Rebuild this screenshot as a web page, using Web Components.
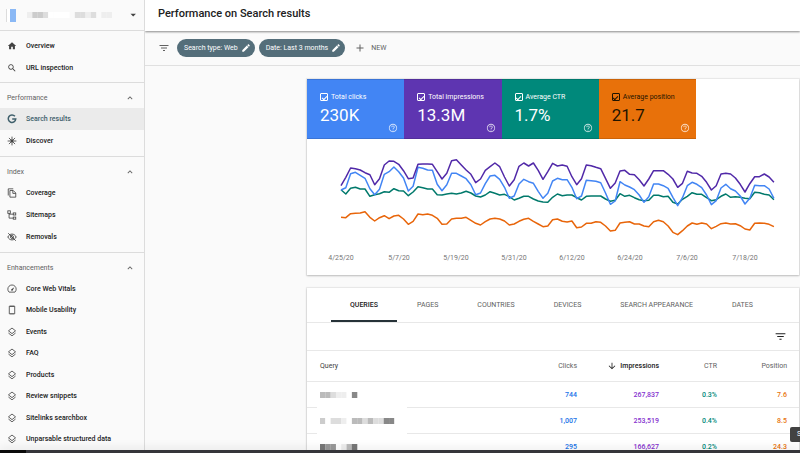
<!DOCTYPE html>
<html lang="en">
<head>
<meta charset="utf-8">
<meta name="viewport" content="width=device-width, initial-scale=1">
<title>Performance on Search results</title>
<style>
  html, body {
    margin: 0;
    height: 100%;
    overflow: hidden;
  }

  body {
    background: #fafafa;
    color: #212121;
    font-family: Roboto, "Liberation Sans", sans-serif;
    font-size: 7px;
    line-height: 10px;
  }
</style>
</head>
<body>

<search-console>
  <side-nav slot="nav">
    <nav-section>
      <nav-item icon="home">Overview</nav-item>
      <nav-item icon="search">URL inspection</nav-item>
    </nav-section>
    <nav-section label="Performance">
      <nav-item icon="google" active>Search results</nav-item>
      <nav-item icon="discover">Discover</nav-item>
    </nav-section>
    <nav-section label="Index">
      <nav-item icon="copy">Coverage</nav-item>
      <nav-item icon="sitemap">Sitemaps</nav-item>
      <nav-item icon="hidden">Removals</nav-item>
    </nav-section>
    <nav-section label="Enhancements" fill>
      <nav-item icon="speed">Core Web Vitals</nav-item>
      <nav-item icon="phone">Mobile Usability</nav-item>
      <nav-item icon="layers">Events</nav-item>
      <nav-item icon="layers">FAQ</nav-item>
      <nav-item icon="layers">Products</nav-item>
      <nav-item icon="layers">Review snippets</nav-item>
      <nav-item icon="layers">Sitelinks searchbox</nav-item>
      <nav-item icon="layers">Unparsable structured data</nav-item>
    </nav-section>
  </side-nav>

  <span slot="title">Performance on Search results</span>

  <filter-bar slot="filters">
    <filter-chip>Search type: Web</filter-chip>
    <filter-chip>Date: Last 3 months</filter-chip>
  </filter-bar>

  <content-card>
    <metric-row>
      <metric-tile label="Total clicks" value="230K" style="--tile: #4285f4"></metric-tile>
      <metric-tile label="Total impressions" value="13.3M" style="--tile: #5e35b1"></metric-tile>
      <metric-tile label="Average CTR" value="1.7%" style="--tile: #00897b"></metric-tile>
      <metric-tile label="Average position" value="21.7" style="--tile: #e8710a; --ink: #1f1400"></metric-tile>
    </metric-row>
    <trend-chart></trend-chart>
  </content-card>

  <content-card>
    <tab-bar tabs="Queries,Pages,Countries,Devices,Search appearance,Dates"></tab-bar>
    <query-table></query-table>
  </content-card>
</search-console>

<script>
  const ICONS = {
    home: '<path d="M10 20v-6h4v6h5v-8h3L12 3 2 12h3v8z"/>',
    search: '<path d="M15.5 14h-.79l-.28-.27C15.41 12.59 16 11.11 16 9.5 16 5.91 13.09 3 9.5 3S3 5.91 3 9.5 5.91 16 9.5 16c1.61 0 3.09-.59 4.23-1.57l.27.28v.79l5 4.99L20.49 19l-4.99-5zm-6 0C7.01 14 5 11.99 5 9.5S7.01 5 9.5 5 14 7.01 14 9.5 11.99 14 9.5 14z"/>',
    google: '<path d="M19 5.5A9 9 0 1 0 21 12H12.5" fill="none" stroke="currentColor" stroke-width="3.6"/>',
    discover: '<g stroke="currentColor" stroke-width="2"><path d="M12 1.5v21M1.5 12h21M4.6 4.6l14.8 14.8M19.4 4.6L4.6 19.4"/></g><circle cx="12" cy="12" r="3.5"/>',
    copy: '<g fill="none" stroke="currentColor" stroke-width="2"><path d="M3 18V2h12"/><path d="M7 6h8l6 6v10H7z"/><path d="M14 6v7h7"/></g>',
    sitemap: '<g fill="none" stroke="currentColor" stroke-width="2"><rect x="2" y="2" width="6" height="6"/><rect x="15" y="7" width="6" height="5"/><rect x="15" y="17" width="6" height="5"/><path d="M5 8v11.5h10M5 10h10"/></g>',
    hidden: '<g fill="none" stroke="currentColor" stroke-width="2.2"><path d="M2 12c2-4.5 5.8-7 10-7s8 2.5 10 7c-2 4.5-5.8 7-10 7s-8-2.5-10-7z"/><circle cx="12" cy="12" r="3.5"/><path d="M3 3l18 18"/></g>',
    speed: '<path d="M5 19.5A10 10 0 1 1 19 19.5z" fill="none" stroke="currentColor" stroke-width="2"/><path d="M17.5 8l-4 7.5a2 2 0 0 1-3-3z"/>',
    phone: '<rect x="5.5" y="2.5" width="13" height="19" rx="1" fill="none" stroke="currentColor" stroke-width="2"/><path d="M6 3h12v1.5H6zM6 19.5h12V21H6z"/>',
    layers: '<g fill="none" stroke="currentColor" stroke-width="2"><path d="M12 2.5l8.5 6.7-8.5 6.7-8.5-6.7z"/><path d="M3.5 14.5l8.5 6.7 8.5-6.7"/></g>',
    less: '<path d="M12 8l-6 6 1.41 1.41L12 10.83l4.59 4.58L18 14z"/>',
    drop: '<path d="M6 9l6.5 6.5L19 9z"/>',
    edit: '<path d="M3 17.25V21h3.75L17.81 9.94l-3.75-3.75L3 17.25zM20.71 7.04c.39-.39.39-1.02 0-1.41l-2.34-2.34c-.39-.39-1.02-.39-1.41 0l-1.83 1.83 3.75 3.75 1.83-1.83z"/>',
    filter: '<path d="M10 18h4v-2h-4v2zM3 6v2h18V6H3zm3 7h12v-2H6v2z"/>',
    add: '<path d="M19 13h-6v6h-2v-6H5v-2h6V5h2v6h6v2z"/>',
    help: '<path d="M11 18h2v-2h-2v2zm1-16C6.48 2 2 6.48 2 12s4.48 10 10 10 10-4.48 10-10S17.52 2 12 2zm0 18c-4.41 0-8-3.59-8-8s3.59-8 8-8 8 3.59 8 8-3.59 8-8 8zm0-14c-2.21 0-4 1.79-4 4h2c0-1.1.9-2 2-2s2 .9 2 2c0 2-3 1.75-3 5h2c0-2.25 3-2.5 3-5 0-2.21-1.79-4-4-4z"/>',
    down: '<path d="M20 12l-1.41-1.41L13 16.17V4h-2v12.17l-5.58-5.59L4 12l8 8z"/>'
  };

  const RESET = `
    :host, * { box-sizing: border-box; }
    button {
      margin: 0;
      padding: 0;
      border: 0;
      background: none;
      color: inherit;
      font: inherit;
      cursor: pointer;
    }
  `;

  class AppIcon extends HTMLElement {
    connectedCallback() {
      this.attachShadow({ mode: "open" }).innerHTML = `
        <style>
          :host { display: block; flex: none; width: 10px; height: 10px; }
          svg { display: block; width: 100%; height: 100%; fill: currentColor; }
        </style>
        <svg viewBox="0 0 24 24" aria-hidden="true">${ICONS[this.getAttribute("name")]}</svg>
      `;
    }
  }

  // Masked text: every hex digit in "shades" is one grey block, a dot is a gap
  class MaskedText extends HTMLElement {
    connectedCallback() {
      const blocks = [...this.getAttribute("shades")].map((s, i) =>
        s === "." ? "" : `<rect x="${i}" width="1.02" height="1" fill="#${s}${s}${s}"/>`
      ).join("");
      this.attachShadow({ mode: "open" }).innerHTML = `
        <style>
          :host { display: block; }
          svg { display: block; width: 85px; height: 6px; }
        </style>
        <svg viewBox="0 0 16 1" preserveAspectRatio="none" aria-hidden="true">${blocks}</svg>
      `;
    }
  }

  class NavItem extends HTMLElement {
    connectedCallback() {
      this.attachShadow({ mode: "open" }).innerHTML = `
        <style>
          ${RESET}
          :host { display: grid; min-height: 20px; color: #424242; }
          :host([active]) { background: #ebebeb; color: #3f5f6b; }
          a {
            display: flex;
            align-items: center;
            gap: 9px;
            padding: 0 7px;
            color: inherit;
            font-weight: 500;
            text-decoration: none;
            white-space: nowrap;
          }
          span { color: #212121; }
          :host([active]) span { color: inherit; }
        </style>
        <a href="#"><app-icon name="${this.getAttribute("icon")}"></app-icon><span><slot></slot></span></a>
      `;
    }
  }

  class NavSection extends HTMLElement {
    connectedCallback() {
      const label = this.getAttribute("label");
      this.attachShadow({ mode: "open" }).innerHTML = `
        <style>
          ${RESET}
          :host {
            display: flex;
            flex-direction: column;
            padding: 4px 0;
            border-top: 1px solid #dcdcdc;
          }
          :host(:not([label])) { padding-bottom: 3px; }
          :host([fill]) { flex: 1; padding-bottom: 0; }
          button {
            display: flex;
            justify-content: space-between;
            align-items: center;
            height: 21px;
            padding: 0 9px 0 7px;
            color: #616161;
          }
          .items { display: grid; grid-auto-rows: 22px; }
          :host([fill]) .items { flex: 1; grid-auto-rows: minmax(20px, 1fr); }
        </style>
        ${label ? `<button type="button">${label}<app-icon name="less"></app-icon></button>` : ""}
        <div class="items"><slot></slot></div>
      `;
    }
  }

  class SideNav extends HTMLElement {
    connectedCallback() {
      this.attachShadow({ mode: "open" }).innerHTML = `
        <style>
          ${RESET}
          :host {
            display: flex;
            flex-direction: column;
            height: 100%;
            border-right: 1px solid #dcdcdc;
          }
          .property {
            display: flex;
            align-items: center;
            gap: 11px;
            height: 30px;
            padding: 0 6px;
            color: #424242;
          }
          .favicon {
            width: 10px;
            height: 13px;
            border-left: 1px solid #dcdcdc;
            background: linear-gradient(90deg, #fff 3px, #8ab8f5 3px);
          }
          masked-text { flex: 1; }
        </style>
        <button type="button" class="property" aria-label="Select property">
          <span class="favicon"></span>
          <masked-text shades="eccdffff.dded.ee"></masked-text>
          <app-icon name="drop"></app-icon>
        </button>
        <slot></slot>
      `;
    }
  }

  class FilterChip extends HTMLElement {
    connectedCallback() {
      this.attachShadow({ mode: "open" }).innerHTML = `
        <style>
          ${RESET}
          :host { display: block; }
          button {
            display: flex;
            align-items: center;
            gap: 3px;
            height: 18px;
            padding: 0 4px 0 7px;
            border-radius: 9px;
            background: #546e7a;
            color: #fff;
            white-space: nowrap;
          }
        </style>
        <button type="button"><slot></slot><app-icon name="edit"></app-icon></button>
      `;
    }
  }

  class FilterBar extends HTMLElement {
    connectedCallback() {
      this.attachShadow({ mode: "open" }).innerHTML = `
        <style>
          ${RESET}
          :host {
            display: flex;
            align-items: center;
            gap: 4px;
            height: 35px;
            padding: 0 13px;
            border-bottom: 1px solid #e0e0e0;
            color: #616161;
          }
          .filter { padding-right: 3px; }
          .filter app-icon, .new app-icon { width: 12px; height: 12px; }
          .new {
            display: flex;
            align-items: center;
            gap: 5px;
            padding: 0 5px;
          }
        </style>
        <button type="button" class="filter" aria-label="Filter"><app-icon name="filter"></app-icon></button>
        <slot></slot>
        <button type="button" class="new"><app-icon name="add"></app-icon>NEW</button>
      `;
    }
  }

  class ContentCard extends HTMLElement {
    connectedCallback() {
      this.attachShadow({ mode: "open" }).innerHTML = `
        <style>
          :host {
            display: block;
            background: #fff;
            box-shadow: 0 0 1px 1px rgba(0, 0, 0, .06), 0 1px 2px rgba(0, 0, 0, .2);
          }
        </style>
        <slot></slot>
      `;
    }
  }

  class MetricRow extends HTMLElement {
    connectedCallback() {
      this.attachShadow({ mode: "open" }).innerHTML = `
        <style>
          :host {
            display: grid;
            grid-template-columns: repeat(4, 1fr);
            max-width: 389px;
          }
        </style>
        <slot></slot>
      `;
    }
  }

  class MetricTile extends HTMLElement {
    connectedCallback() {
      this.attachShadow({ mode: "open" }).innerHTML = `
        <style>
          ${RESET}
          :host {
            display: grid;
            grid-template-columns: 1fr auto;
            align-content: start;
            height: 60px;
            padding: 13px 6px 0 13px;
            background: var(--tile);
            box-shadow: inset 0 1px rgba(0, 0, 0, .12), inset 0 -1px rgba(0, 0, 0, .12);
            color: var(--ink, #fff);
          }
          label {
            grid-column: 1 / 3;
            display: flex;
            align-items: center;
            gap: 3px;
            white-space: nowrap;
          }
          input {
            appearance: none;
            display: grid;
            place-items: center;
            width: 8px;
            height: 8px;
            margin: 0;
            border: 1px solid;
            border-radius: 1px;
            color: inherit;
          }
          input:checked::before {
            content: "";
            width: 4px;
            height: 2px;
            border: solid;
            border-width: 0 0 1px 1px;
            rotate: -45deg;
          }
          output { font-size: 17px; line-height: 20px; padding-top: 3px; }
          button { align-self: end; color: #fff; opacity: .75; margin-bottom: -8px; }
        </style>
        <label><input type="checkbox" checked>${this.getAttribute("label")}</label>
        <output>${this.getAttribute("value")}</output>
        <button type="button" aria-label="Help"><app-icon name="help"></app-icon></button>
      `;
    }
  }

  // Daily values, as depth below the top of the plot in thirds of a unit
  const SERIES = [
    ["#00796b", [134,147,130,127,132,132,154,149,146,140,142,131,137,138,152,141,125,128,132,132,149,150,147,145,147,144,139,144,153,156,150,140,145,150,148,155,165,160,154,154,162,168,171,172,157,147,152,150,150,158,165,154,153,153,153,162,169,166,146,154,151,158,164,167,166,151,151,155,154,172,177,163,154,143,148,148,158,167,164,154,147,157,155,157,160,161,142,143,148,150,164]],
    ["#4285f4", [135,128,86,82,91,100,131,149,133,88,80,66,80,99,138,124,67,70,75,76,118,137,119,85,85,93,101,119,149,144,116,93,91,103,127,160,153,117,103,110,115,139,160,145,108,100,104,104,127,161,153,106,107,109,113,144,178,168,110,120,126,134,150,172,155,117,117,122,130,157,182,158,122,112,118,128,150,179,167,129,118,131,138,153,177,160,121,122,122,132,160]],
    ["#5129a8", [122,97,69,71,75,83,89,119,101,60,48,49,58,77,101,99,58,57,57,58,80,102,85,47,44,60,75,88,113,102,76,65,54,65,96,123,104,64,54,63,54,76,103,80,55,63,60,64,95,119,101,60,62,67,71,100,130,114,78,76,88,89,104,123,102,77,77,77,88,102,127,115,79,84,85,94,112,135,122,87,85,87,99,118,141,116,95,95,87,96,112]],
    ["#e8650a", [217,218,206,205,204,200,217,228,218,212,221,213,211,222,238,229,207,209,207,211,220,238,237,222,220,220,217,226,235,240,230,222,220,222,228,240,237,229,223,220,229,237,245,243,224,222,229,231,228,248,246,235,235,230,232,243,258,256,234,232,230,237,237,243,245,230,226,230,243,262,269,257,243,234,238,234,237,251,244,236,234,237,236,242,252,255,235,234,235,238,245]]
  ];
  const DATES = ["4/25/20", "5/7/20", "5/19/20", "5/31/20", "6/12/20", "6/24/20", "7/6/20", "7/18/20"];

  class TrendChart extends HTMLElement {
    connectedCallback() {
      const left = 34;
      const step = 4.81;
      const lines = SERIES.map(([color, values]) => {
        const points = values.map((v, i) => `${(left + i * step).toFixed(1)},${(6 + v / 3).toFixed(1)}`);
        return `<polyline stroke="${color}" points="${points.join(" ")}"/>`;
      }).join("");
      const labels = DATES.map((d, i) => `<text x="${Math.round(left + i * 12 * step)}" y="121">${d}</text>`).join("");

      this.attachShadow({ mode: "open" }).innerHTML = `
        <style>
          :host { display: block; }
          svg { display: block; width: 100%; }
          polyline { fill: none; stroke-width: 1.5; stroke-linejoin: round; }
          text { fill: #757575; font-size: 7px; text-anchor: middle; }
        </style>
        <svg viewBox="0 0 492 136" role="img" aria-label="Search performance by day">${lines}${labels}</svg>
      `;
    }
  }

  class TabBar extends HTMLElement {
    connectedCallback() {
      const tabs = this.getAttribute("tabs").split(",").map((t, i) =>
        `<button type="button" role="tab" aria-selected="${i === 0}">${t.toUpperCase()}</button>`
      ).join("");
      this.setAttribute("role", "tablist");
      this.attachShadow({ mode: "open" }).innerHTML = `
        <style>
          ${RESET}
          :host {
            display: flex;
            gap: 1px;
            height: 35px;
            padding-left: 24px;
            border-bottom: 1px solid #e8e8e8;
          }
          button {
            padding: 2px 19px 0;
            border-bottom: 2px solid transparent;
            color: #616161;
            white-space: nowrap;
          }
          [aria-selected="true"] {
            border-color: #263238;
            color: #212121;
            font-weight: 500;
          }
        </style>
        ${tabs}
      `;
    }
  }

  const ROWS = [
    ["bbdeef8", "744", "267,837", "0.3%", "7.6"],
    ["cfddefbbdbdd88f", "1,007", "253,519", "0.4%", "8.5"],
    ["799feb7", "295", "166,627", "0.2%", "24.3"]
  ];

  class QueryTable extends HTMLElement {
    connectedCallback() {
      const rows = ROWS.map(([query, clicks, impressions, ctr, position]) => `
        <tr>
          <td><masked-text shades="${query}"></masked-text></td>
          <td class="clicks">${clicks}</td>
          <td class="impressions">${impressions}</td>
          <td class="ctr">${ctr}</td>
          <td class="position">${position}</td>
        </tr>`).join("");

      this.attachShadow({ mode: "open" }).innerHTML = `
        <style>
          ${RESET}
          :host { display: block; }
          .tools {
            display: flex;
            justify-content: flex-end;
            align-items: center;
            height: 28px;
            padding-right: 12px;
            border-bottom: 1px solid #e8e8e8;
          }
          .tools app-icon { width: 13px; height: 13px; }
          table {
            width: 100%;
            border-collapse: separate;
            border-spacing: 0;
            table-layout: fixed;
          }
          th, td {
            height: 26px;
            padding: 0;
            border-bottom: 1px solid #e8e8e8;
            font-weight: 500;
            text-align: right;
          }
          th { height: 31px; color: #616161; font-weight: 400; }
          th:first-child { padding-left: 13px; color: #424242; text-align: left; }
          th:last-child, td:last-child { padding-right: 12px; }
          td:first-child { padding-left: 10px; }
          col:nth-child(2) { width: 70px; }
          col:nth-child(3) { width: 82px; }
          col:nth-child(4) { width: 58px; }
          col:nth-child(5) { width: 82px; }
          /* the mask also hides the rule under its own row */
          masked-text {
            position: relative;
            width: 90px;
            margin-bottom: -3px;
            padding: 10px 0 12px 3px;
            background: #fff;
          }
          .sorted { color: #212121; font-weight: 500; }
          .sorted span { display: flex; justify-content: flex-end; align-items: center; gap: 3px; }
          .clicks { color: #1a73e8; }
          .impressions { color: #8430ce; }
          .ctr { color: #00897b; }
          .position { color: #e8710a; }
        </style>
        <div class="tools"><button type="button" aria-label="Filter rows"><app-icon name="filter"></app-icon></button></div>
        <table>
          <colgroup><col><col><col><col><col></colgroup>
          <thead>
            <tr>
              <th>Query</th>
              <th>Clicks</th>
              <th class="sorted"><span><app-icon name="down"></app-icon>Impressions</span></th>
              <th>CTR</th>
              <th>Position</th>
            </tr>
          </thead>
          <tbody>${rows}</tbody>
        </table>
      `;
    }
  }

  class SearchConsole extends HTMLElement {
    connectedCallback() {
      this.attachShadow({ mode: "open" }).innerHTML = `
        <style>
          ${RESET}
          :host {
            display: grid;
            grid-template-columns: 145px 1fr;
            grid-template-rows: 1fr 3px;
            height: 100vh;
            overflow: hidden;
          }
          aside, main { min-height: 0; overflow: hidden; }
          header {
            position: relative;
            height: 31px;
            padding: 0 13px;
            background: #fff;
            box-shadow: 0 1px 2px rgba(0, 0, 0, .45);
          }
          h1 { margin: 0; font-size: 11px; line-height: 28px; font-weight: 500; }
          .cards {
            display: grid;
            gap: 13px;
            padding: 13px 1px 0 162px;
          }
          .dock {
            grid-column: 1 / 3;
            position: relative;
            background: linear-gradient(90deg, #0a0a0a 26px, #35353a 26px);
            box-shadow: 0 -1px 10px rgba(0, 0, 0, .16);
          }
          .tip {
            position: absolute;
            right: -14px;
            bottom: 11px;
            width: 24px;
            height: 15px;
            padding-left: 7px;
            border-radius: 2px;
            background: #424242;
            color: #fff;
            line-height: 15px;
          }
        </style>
        <aside><slot name="nav"></slot></aside>
        <main>
          <header><h1><slot name="title"></slot></h1></header>
          <slot name="filters"></slot>
          <div class="cards"><slot></slot></div>
        </main>
        <div class="dock"></div>
        <div class="tip" role="tooltip">S</div>
      `;
    }
  }

  customElements.define("app-icon", AppIcon);
  customElements.define("masked-text", MaskedText);
  customElements.define("nav-item", NavItem);
  customElements.define("nav-section", NavSection);
  customElements.define("side-nav", SideNav);
  customElements.define("filter-chip", FilterChip);
  customElements.define("filter-bar", FilterBar);
  customElements.define("content-card", ContentCard);
  customElements.define("metric-row", MetricRow);
  customElements.define("metric-tile", MetricTile);
  customElements.define("trend-chart", TrendChart);
  customElements.define("tab-bar", TabBar);
  customElements.define("query-table", QueryTable);
  customElements.define("search-console", SearchConsole);
</script>
</body>
</html>
